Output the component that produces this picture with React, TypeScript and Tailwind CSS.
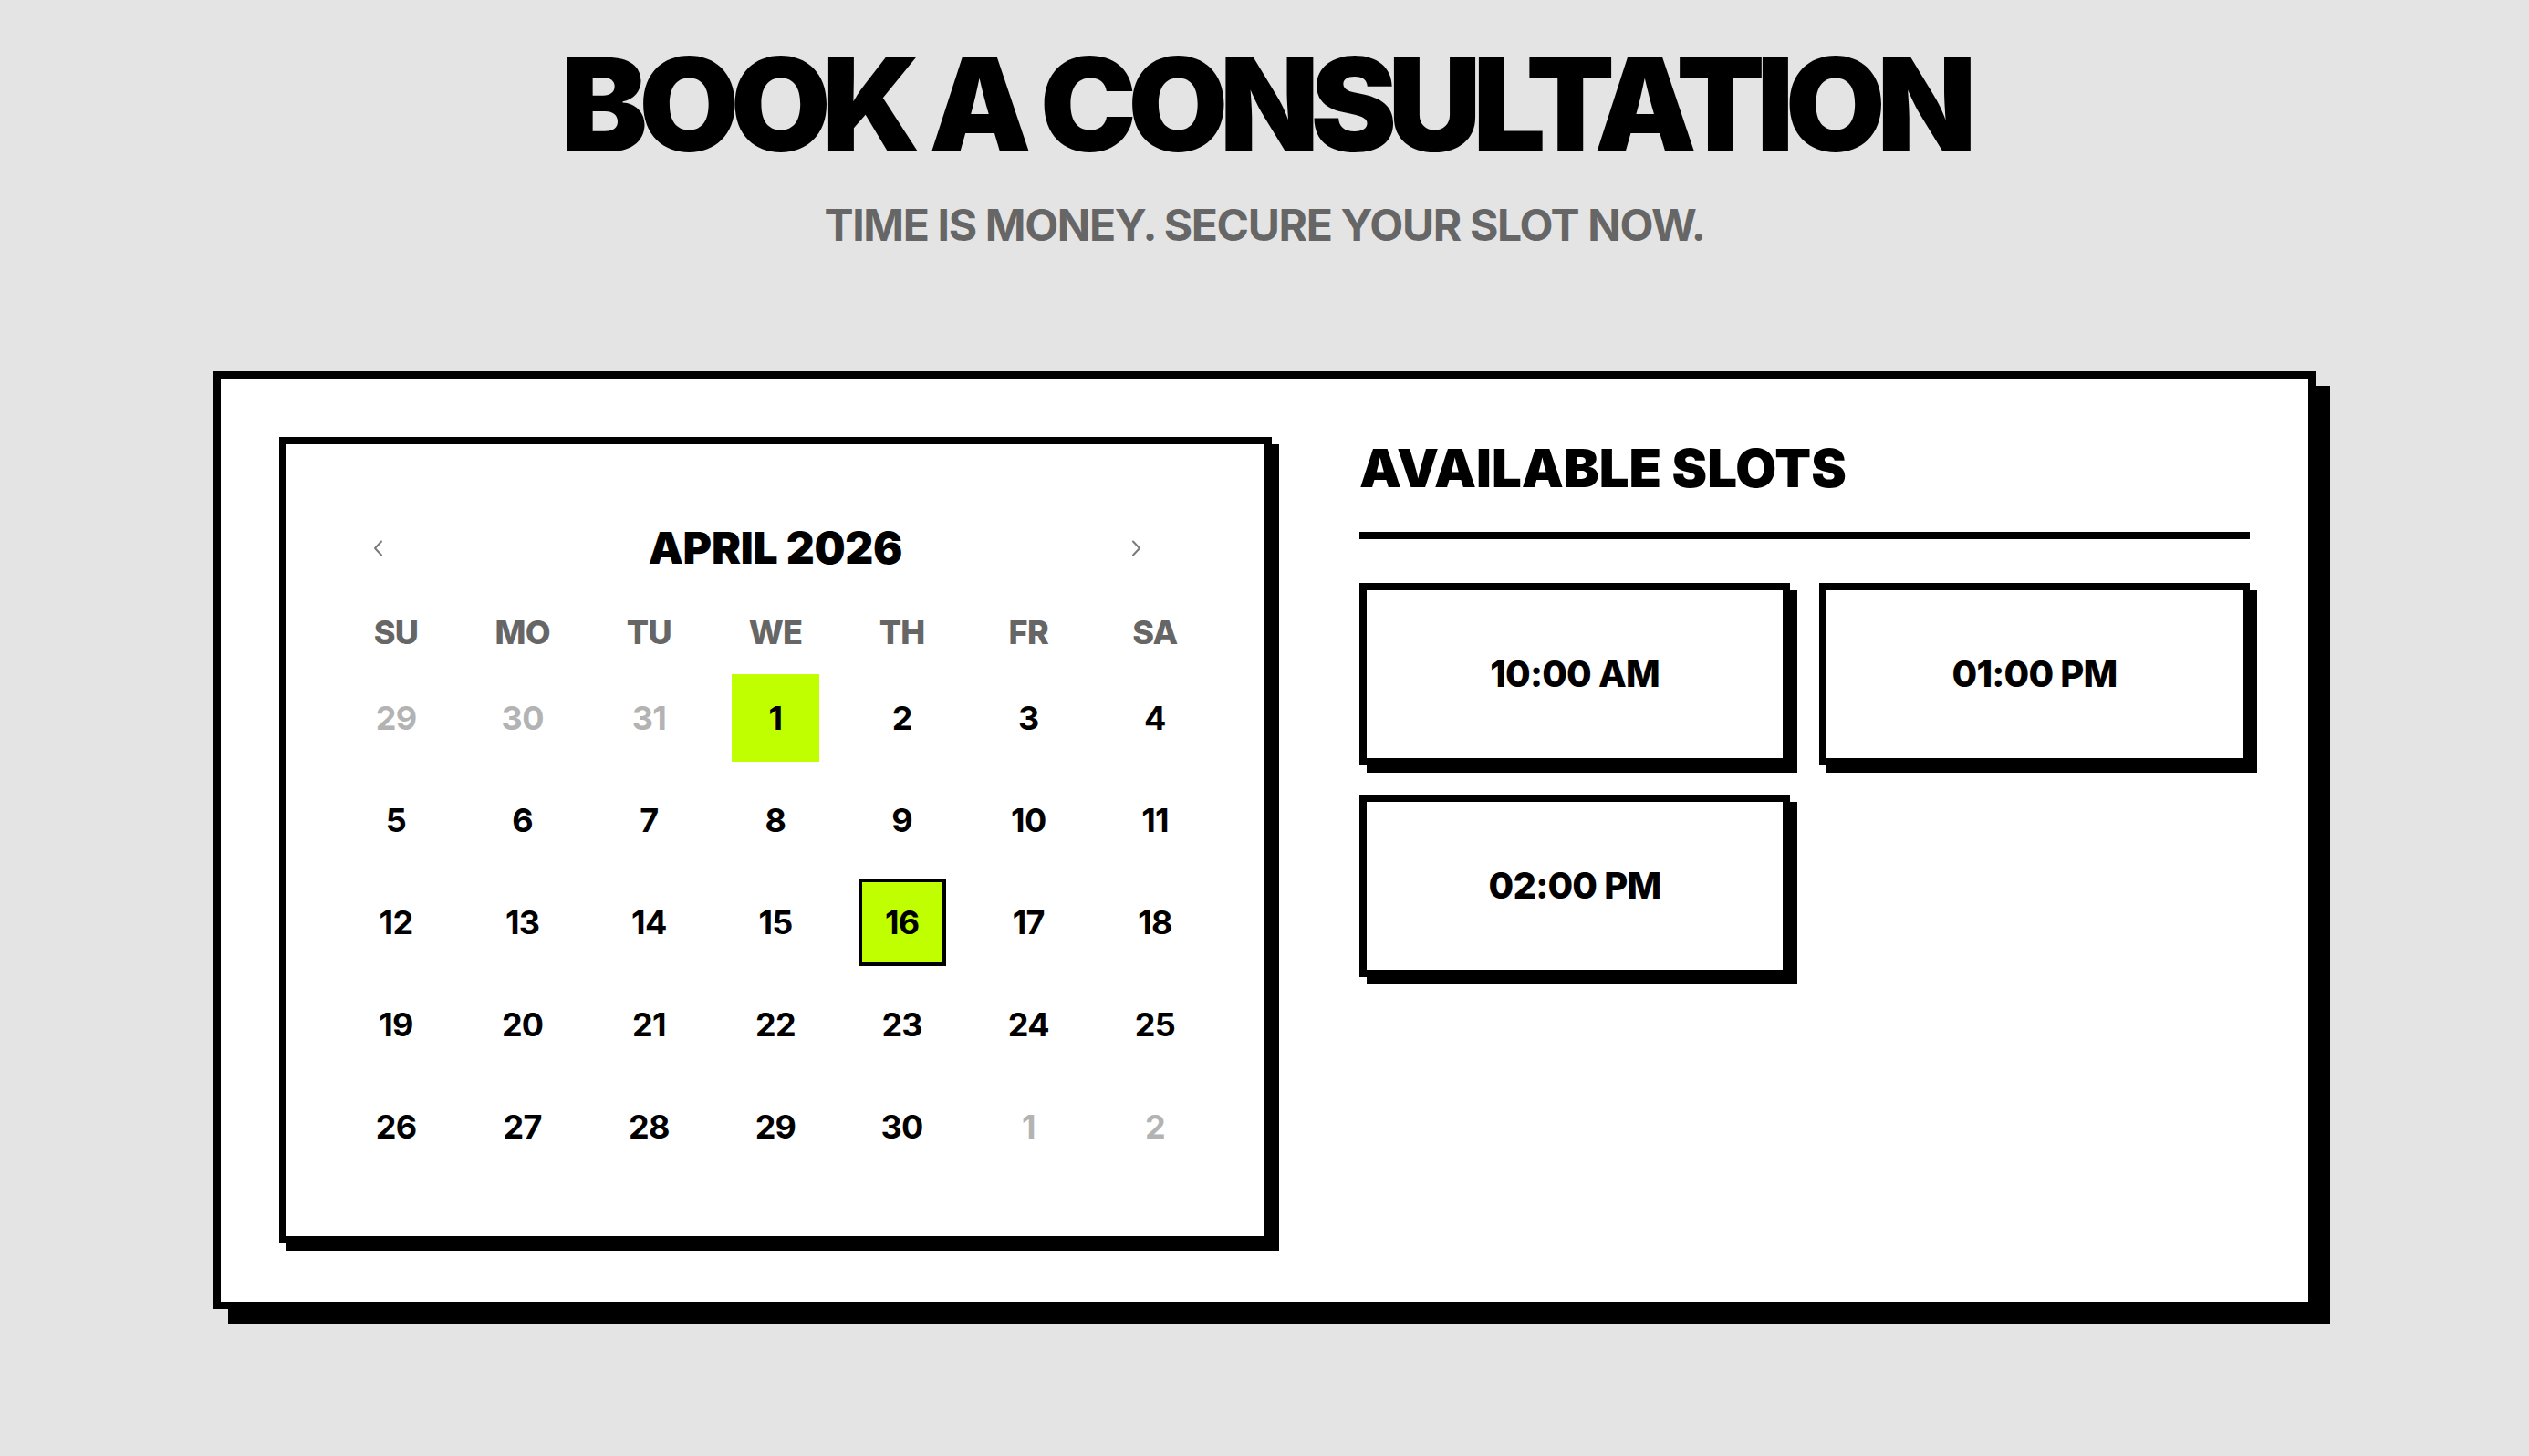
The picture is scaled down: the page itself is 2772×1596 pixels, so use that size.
import React from "react";

type Day = { n: number; muted?: boolean; today?: boolean; selected?: boolean };

const WEEKDAYS = ["SU", "MO", "TU", "WE", "TH", "FR", "SA"];

const DAYS: Day[] = [
  { n: 29, muted: true },
  { n: 30, muted: true },
  { n: 31, muted: true },
  { n: 1, today: true },
  ...Array.from({ length: 29 }, (_, i) => ({ n: i + 2, selected: i + 2 === 16 })),
  { n: 1, muted: true },
  { n: 2, muted: true },
];

const SLOTS = ["10:00 AM", "01:00 PM", "02:00 PM"];

function Chevron({ dir }: { dir: "left" | "right" }) {
  return (
    <svg width="12" height="18" viewBox="0 0 12 18" fill="none">
      <path
        d={dir === "left" ? "M10 1.5 L3 9 L10 16.5" : "M2 1.5 L9 9 L2 16.5"}
        stroke="#7a7a7a"
        strokeWidth="2"
        strokeLinecap="round"
        strokeLinejoin="round"
      />
    </svg>
  );
}

function DayCell({ day }: { day: Day }) {
  let cls = "text-black";
  if (day.muted) cls = "text-[#b3b3b3]";
  if (day.today) cls = "bg-[#bfff00] text-black";
  if (day.selected) cls = "bg-[#bfff00] text-black border-4 border-black";
  return (
    <button
      type="button"
      className={`flex h-[96px] w-[96px] items-center justify-center text-[36px] font-bold leading-none tracking-[-0.02em] ${cls}`}
    >
      {day.n}
    </button>
  );
}

function Calendar() {
  return (
    <div className="w-[1088px] shrink-0 border-8 border-black bg-white px-[72px] pb-[72px] pt-[90px] shadow-[8px_8px_0_0_#000]">
      <div className="mb-[38px] grid h-[48px] grid-cols-[1fr_auto_1fr] items-center">
        <div className="flex pl-[22px]">
          <button type="button" className="flex items-center">
            <Chevron dir="left" />
          </button>
        </div>
        <h3 className="text-[48px] font-black leading-none tracking-[-0.005em] text-black">
          APRIL 2026
        </h3>
        <div className="flex justify-end pr-[62px]">
          <button type="button" className="flex items-center">
            <Chevron dir="right" />
          </button>
        </div>
      </div>

      <div className="grid grid-cols-[repeat(7,96px)] justify-between gap-y-4">
        {WEEKDAYS.map((w) => (
          <div
            key={w}
            className="flex h-[60px] items-center justify-center text-[36px] font-extrabold leading-none tracking-[-0.02em] text-[#666666]"
          >
            {w}
          </div>
        ))}
        {DAYS.map((d, i) => (
          <DayCell key={i} day={d} />
        ))}
      </div>
    </div>
  );
}

function Slots() {
  return (
    <div className="flex-1">
      <h2 className="border-b-8 border-black pb-[34px] text-[58px] font-black leading-[1.2] tracking-[0em] text-black">
        AVAILABLE SLOTS
      </h2>
      <div className="mt-12 grid grid-cols-2 gap-8">
        {SLOTS.map((s) => (
          <button
            key={s}
            type="button"
            className="flex h-[200px] items-center justify-center border-8 border-black bg-white text-[40px] font-extrabold leading-none tracking-[-0.02em] text-black shadow-[8px_8px_0_0_#000]"
          >
            {s}
          </button>
        ))}
      </div>
    </div>
  );
}

export default function App() {
  return (
    <div className="min-h-screen bg-[#e4e4e4] pt-[43px] font-['Inter',_'Noto_Sans',_sans-serif]">
      <header className="text-center">
        <h1 className="text-[142px] font-black leading-none tracking-[-0.068em] text-black">
          BOOK A CONSULTATION
        </h1>
        <p className="mt-[38px] text-[48px] font-bold leading-none tracking-[-0.028em] text-[#666666]">
          TIME IS MONEY. SECURE YOUR SLOT NOW.
        </p>
      </header>

      <main className="mx-auto mt-[136px] flex w-[2304px] gap-[96px] border-8 border-black bg-white p-16 shadow-[16px_16px_0_0_#000]">
        <Calendar />
        <Slots />
      </main>
    </div>
  );
}
